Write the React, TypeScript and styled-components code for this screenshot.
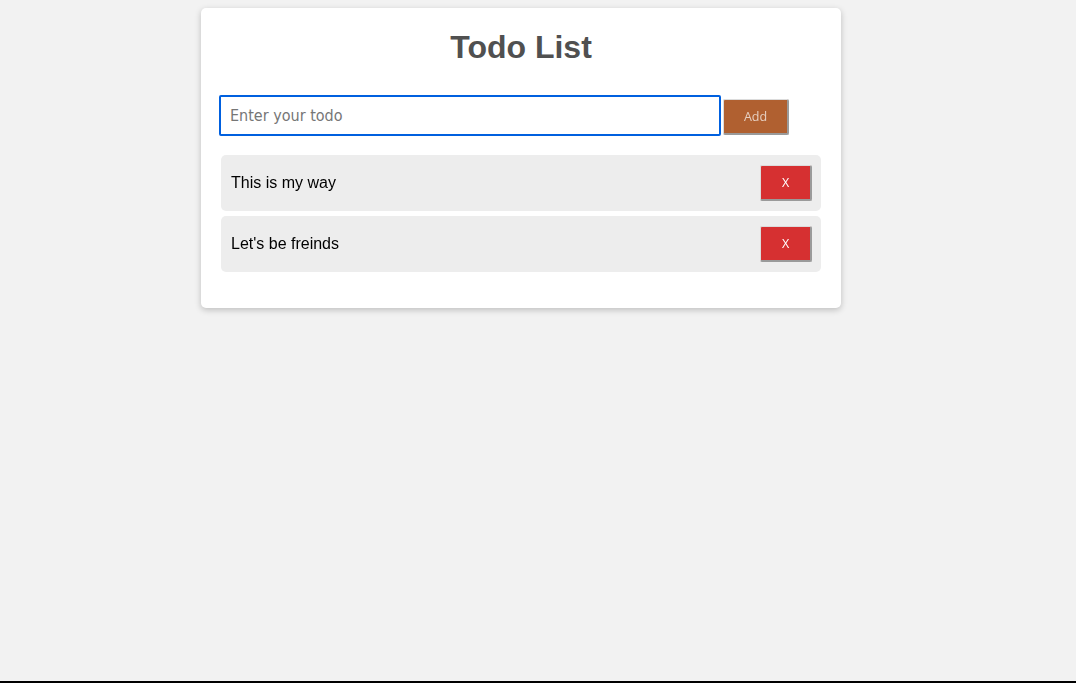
import React from "react";
import styled, { createGlobalStyle } from "styled-components";

const Global = createGlobalStyle`
  html, body { margin: 0; padding: 0; background: #f2f2f2; }
  body { font-family: "Liberation Sans", Arial, sans-serif; }
  * { box-sizing: border-box; }
`;

const Page = styled.div`
  height: 683px;
  border-bottom: 2px solid #000;
  padding: 8px 0 0 201px;
`;

const Card = styled.div`
  width: 640px;
  background: #fff;
  border-radius: 5px;
  box-shadow: 0 2px 6px rgba(0, 0, 0, 0.22);
  padding: 21px 20px 36px;
`;

const Title = styled.h1`
  margin: 0 0 29px;
  text-align: center;
  font-size: 32px;
  font-weight: bold;
  color: #505050;
  font-family: "Liberation Sans", Arial, sans-serif;
`;

const Form = styled.div`
  display: flex;
  align-items: flex-start;
  gap: 2px;
  margin-left: -2px;
`;

const Input = styled.input`
  width: 502px;
  height: 41px;
  border: 2px solid #0060df;
  border-radius: 2px;
  outline: none;
  padding: 0 9px;
  font-family: "Liberation Sans Narrow", "DejaVu Sans Condensed", "Open Sans", sans-serif;
  font-stretch: 75%;
  font-size: 16px;
  color: #222;
  caret-color: #000;
  &::placeholder { color: #767676; }
`;

const Button = styled.button<{ $bg: string; $fg: string; $w: number; $top?: number }>`
  width: ${(p) => p.$w}px;
  height: 36px;
  margin-top: ${(p) => p.$top ?? 0}px;
  background: ${(p) => p.$bg};
  color: ${(p) => p.$fg};
  border-style: solid;
  border-width: 1px 2px 2px 1px;
  border-color: #dcdcdc #9a9a9a #9a9a9a #dcdcdc;
  border-radius: 2px;
  font-family: "Open Sans", "Noto Sans", sans-serif;
  font-size: 12.5px;
  padding: 0;
  cursor: pointer;
`;

const List = styled.ul`
  list-style: none;
  margin: 19px 0 0;
  padding: 0;
  display: flex;
  flex-direction: column;
  gap: 5px;
`;

const Item = styled.li`
  height: 56px;
  background: #ededed;
  border-radius: 5px;
  display: flex;
  align-items: center;
  justify-content: space-between;
  padding: 0 9px 0 10px;
  font-size: 16px;
  color: #000;
`;

const todos = ["This is my way", "Let's be freinds"];

export default function App() {
  return (
    <>
      <Global />
      <Page>
        <Card>
          <Title>Todo List</Title>
          <Form>
            <Input placeholder="Enter your todo" autoFocus />
            <Button $bg="#b06030" $fg="#e6cfc0" $w={66} $top={4}>Add</Button>
          </Form>
          <List>
            {todos.map((t) => (
              <Item key={t}>
                <span>{t}</span>
                <Button $bg="#d63031" $fg="#fff" $w={52}>X</Button>
              </Item>
            ))}
          </List>
        </Card>
      </Page>
    </>
  );
}
